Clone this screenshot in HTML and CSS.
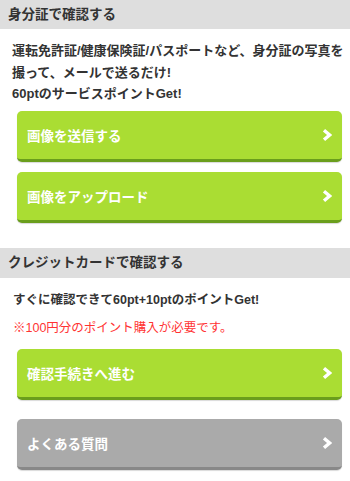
FILE: index.html
```html
<!DOCTYPE html>
<html lang="ja">
<head>
  <meta charset="UTF-8" />
  <meta name="viewport" content="width=device-width, initial-scale=1.0"/>
  <title>本人確認</title>
  <link rel="stylesheet" href="styles.css">
</head>
<body>

<div class="section">
  <h2 class="section-title">身分証で確認する</h2>
  <p class="lead">運転免許証/健康保険証/パスポートなど、身分証の写真を撮って、メールで送るだけ!<br>60ptのサービスポイントGet!</p>
  <a class="btn" href="#">
    <span>画像を送信する</span>
    <svg class="chevron" width="10" height="12" viewBox="0 0 10 12"><polyline points="2,1.3 7.6,6 2,10.7" /></svg>
  </a>
  <a class="btn" href="#">
    <span>画像をアップロード</span>
    <svg class="chevron" width="10" height="12" viewBox="0 0 10 12"><polyline points="2,1.3 7.6,6 2,10.7" /></svg>
  </a>
</div>

<div class="section second">
  <h2 class="section-title">クレジットカードで確認する</h2>
  <p class="lead short">すぐに確認できて60pt+10ptのポイントGet!</p>
  <p class="notice">※100円分のポイント購入が必要です。</p>
  <a class="btn" href="#">
    <span>確認手続きへ進む</span>
    <svg class="chevron" width="10" height="12" viewBox="0 0 10 12"><polyline points="2,1.3 7.6,6 2,10.7" /></svg>
  </a>
  <a class="btn gray" href="#">
    <span>よくある質問</span>
    <svg class="chevron" width="10" height="12" viewBox="0 0 10 12"><polyline points="2,1.3 7.6,6 2,10.7" /></svg>
  </a>
</div>

</body>
</html>
```

FILE: styles.css
```css
body {
  font-family: "Liberation Sans", "Noto Sans CJK JP", sans-serif;
  margin: 0;
  background: #fff;
  color: #333;
}

.section-title {
  margin: 0;
  height: 29px;
  line-height: 29px;
  padding: 0 8px;
  background: #dedede;
  font-size: 13.5px;
  font-weight: bold;
  color: #333;
}

.second {
  margin-top: 25px;
}

.second .section-title {
  height: 30px;
  line-height: 30px;
}

.lead {
  margin: 11px 6px 6px 12px;
  font-size: 13px;
  font-weight: bold;
  line-height: 21.5px;
}

.lead.short {
  margin: 12px 8px 0 13px;
  font-size: 12.5px;
}

.notice {
  margin: 7px 8px 9px 13px;
  font-size: 12.5px;
  line-height: 21.5px;
  color: #f33;
}

.btn {
  display: flex;
  justify-content: space-between;
  align-items: center;
  height: 48px;
  margin: 0 8px 10px 17px;
  padding: 0 10px;
  background: #aadd33;
  border-bottom: 3px solid #6a9e1c;
  border-radius: 5px;
  box-shadow: 0 1px 1px rgba(0, 0, 0, 0.15);
  color: #fff;
  font-size: 13.5px;
  font-weight: bold;
  text-decoration: none;
}

.second .btn {
  margin-bottom: 19px;
}

.btn.gray {
  background: #aaaaaa;
  border-bottom-color: #888888;
}

.chevron {
  fill: none;
  stroke: #fff;
  stroke-width: 3.4;
}
```
